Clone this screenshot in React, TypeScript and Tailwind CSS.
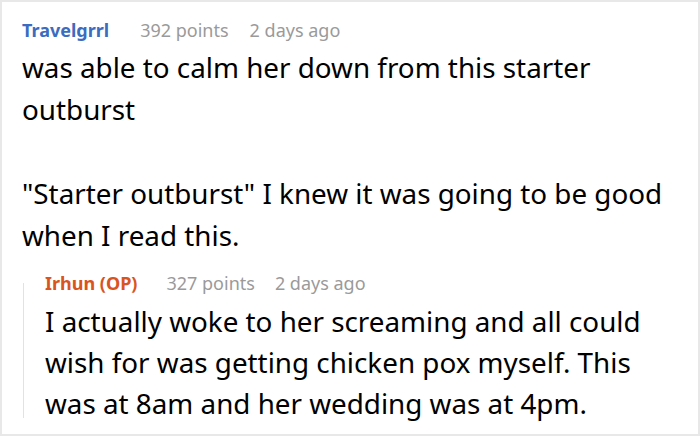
import React from 'react';

const font = { fontFamily: '"Noto Sans", "Open Sans", sans-serif' };

const Meta = ({ name, color, points, age, gapA, gapB }: { name: string; color: string; points: number; age: string; gapA: string; gapB: string }) => (
  <div className="flex items-baseline h-[24px] leading-[24px] text-[18px]">
    <span className={`font-bold ${color}`}>{name}</span>
    <span className={`text-[#9a9a9a] ${gapA}`}>{points} points</span>
    <span className={`text-[#9a9a9a] ${gapB}`}>{age}</span>
  </div>
);

export default function App() {
  return (
    <div style={font} className="w-[700px] h-[436px] bg-white border-2 border-[#e8e8e8] overflow-hidden">
      <div className="pl-[20px] pr-[16px] pt-[16px] text-black">
        {/* Top comment */}
        <Meta name="Travelgrrl" color="text-[#3b6cbf]" points={392} age="2 days ago" gapA="ml-[31px]" gapB="ml-[21px]" />
        <div className="mt-[4px] text-[27.8px] leading-[42px]">
          <p>was able to calm her down from this starter outburst</p>
          <p className="mt-[42px]">"Starter outburst" I knew it was going to be good when I read this.</p>
        </div>

        {/* Reply */}
        <div className="flex mt-[15px]">
          <div className="w-px bg-[#e2e2e2] mt-[12px] mb-[6px] ml-[1px] shrink-0" />
          <div className="pl-[21px]">
            <Meta name="Irhun (OP)" color="text-[#d9541f]" points={327} age="2 days ago" gapA="ml-[29px]" gapB="ml-[20px]" />
            <p className="mt-[6px] text-[27.8px] leading-[41px]">
              I actually woke to her screaming and all could wish for was getting chicken pox myself. This was at 8am and her wedding was at 4pm.
            </p>
          </div>
        </div>
      </div>
    </div>
  );
}
